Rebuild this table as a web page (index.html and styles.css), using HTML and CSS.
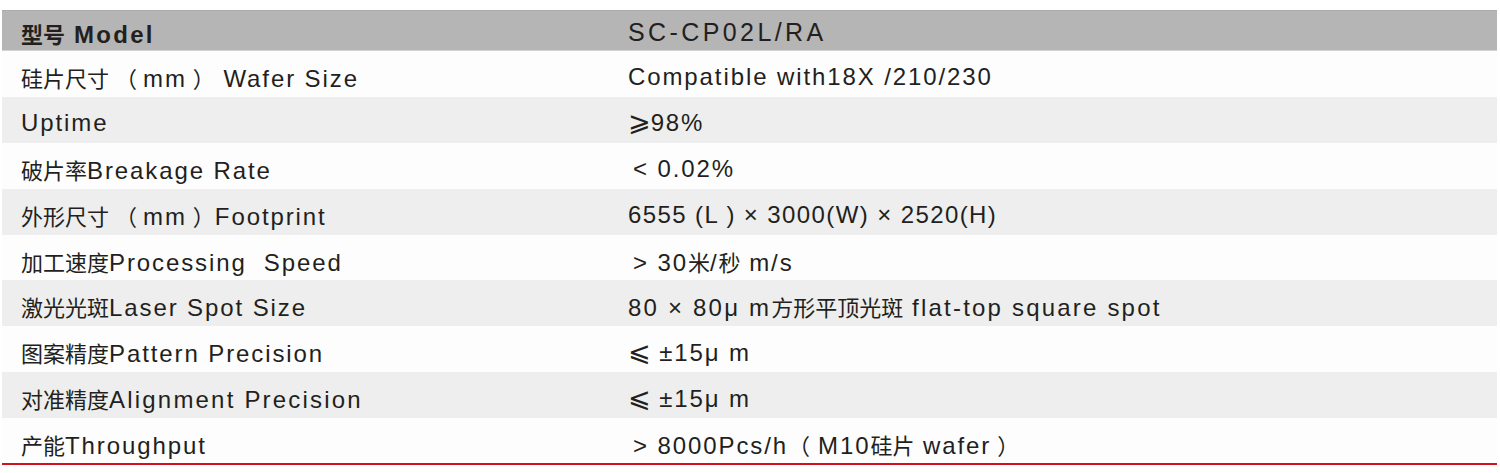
FILE: index.html
```html
<!DOCTYPE html>
<html lang="zh">
<head>
<meta charset="utf-8">
<link rel="stylesheet" href="styles.css">
</head>
<body>
<div class="spec">
  <div class="row head">
    <div class="label"><span class="zh">型号</span> Model</div>
    <div class="value">SC-CP02L/RA</div>
  </div>
  <div class="row">
    <div class="label"><span class="zh">硅片尺寸</span><span class="zh pl">（</span>mm<span class="zh pr">）</span> Wafer Size</div>
    <div class="value">Compatible with18X /210/230</div>
  </div>
  <div class="row alt">
    <div class="label">Uptime</div>
    <div class="value"><span class="sym">⩾</span>98%</div>
  </div>
  <div class="row">
    <div class="label"><span class="zh">破片率</span>Breakage Rate</div>
    <div class="value"><span class="lead">&lt;</span> 0.02%</div>
  </div>
  <div class="row alt">
    <div class="label"><span class="zh">外形尺寸</span><span class="zh pl">（</span>mm<span class="zh pr">）</span>Footprint</div>
    <div class="value tight">6555 (L ) × 3000(W) × 2520(H)</div>
  </div>
  <div class="row">
    <div class="label"><span class="zh">加工速度</span>Processing&nbsp; Speed</div>
    <div class="value"><span class="lead">&gt;</span> 30<span class="zh">米</span>/<span class="zh">秒</span> m/s</div>
  </div>
  <div class="row alt">
    <div class="label"><span class="zh">激光光斑</span>Laser Spot Size</div>
    <div class="value wide">80 × 80μ m<span class="zh">方形平顶光斑</span> flat-top square spot</div>
  </div>
  <div class="row">
    <div class="label"><span class="zh">图案精度</span>Pattern Precision</div>
    <div class="value"><span class="sym">⩽</span> ±15μ m</div>
  </div>
  <div class="row alt">
    <div class="label wide"><span class="zh">对准精度</span>Alignment Precision</div>
    <div class="value"><span class="sym">⩽</span> ±15μ m</div>
  </div>
  <div class="row last">
    <div class="label"><span class="zh">产能</span>Throughput</div>
    <div class="value"><span class="lead">&gt;</span> 8000Pcs/h<span class="zh pin">（</span>M10<span class="zh">硅片</span> wafer<span class="zh pr">）</span></div>
  </div>
</div>
</body>
</html>
```

FILE: styles.css
```css
html, body {
  margin: 0;
  padding: 0;
  background: #ffffff;
}

body {
  font-family: "Liberation Sans", "Noto Sans CJK SC", "DejaVu Sans", sans-serif;
  color: #231f20;
}

.spec {
  margin: 10px 3px 0 2px;
  width: 1495px;
}

.row {
  display: grid;
  grid-template-columns: 626px 1fr;
  align-items: center;
  height: 45.9px;
  box-sizing: border-box;
  background: #fdfdfd;
  font-size: 24px;
  letter-spacing: 1.9px;
  padding-top: 6px;
}

.row.alt {
  background: #edeeed;
}

.row.head {
  height: 41px;
  background: #b4b5b4;
  border-top: 1px solid #aaabaa;
  border-bottom: 1px solid #d2d3d2;
  padding-top: 4px;
}

.row.last {
  border-bottom: 2px solid #d3101f;
  height: 47px;
}

.label {
  padding-left: 19px;
  white-space: nowrap;
}

.head .label {
  font-weight: bold;
  font-size: 24px;
  letter-spacing: 2.3px;
}

.head .value {
  font-size: 25px;
  letter-spacing: 3.4px;
}

.value {
  white-space: nowrap;
}

.tight {
  letter-spacing: 1.4px;
}

.wide {
  letter-spacing: 2.2px;
}

.zh {
  font-family: "Noto Sans CJK SC", sans-serif;
  font-size: 22px;
  letter-spacing: 0;
}

.head .zh {
  font-size: 22px;
  letter-spacing: 0;
}

.pl {
  margin-left: 6px;
  margin-right: 6px;
}

.pr {
  margin-left: 6px;
}

.pin {
  margin-right: 8px;
}

.lead {
  display: inline-block;
  padding-left: 5px;
}

.sym {
  font-family: "DejaVu Sans", sans-serif;
  font-size: 27px;
  letter-spacing: 0;
  line-height: 1;
}
```
